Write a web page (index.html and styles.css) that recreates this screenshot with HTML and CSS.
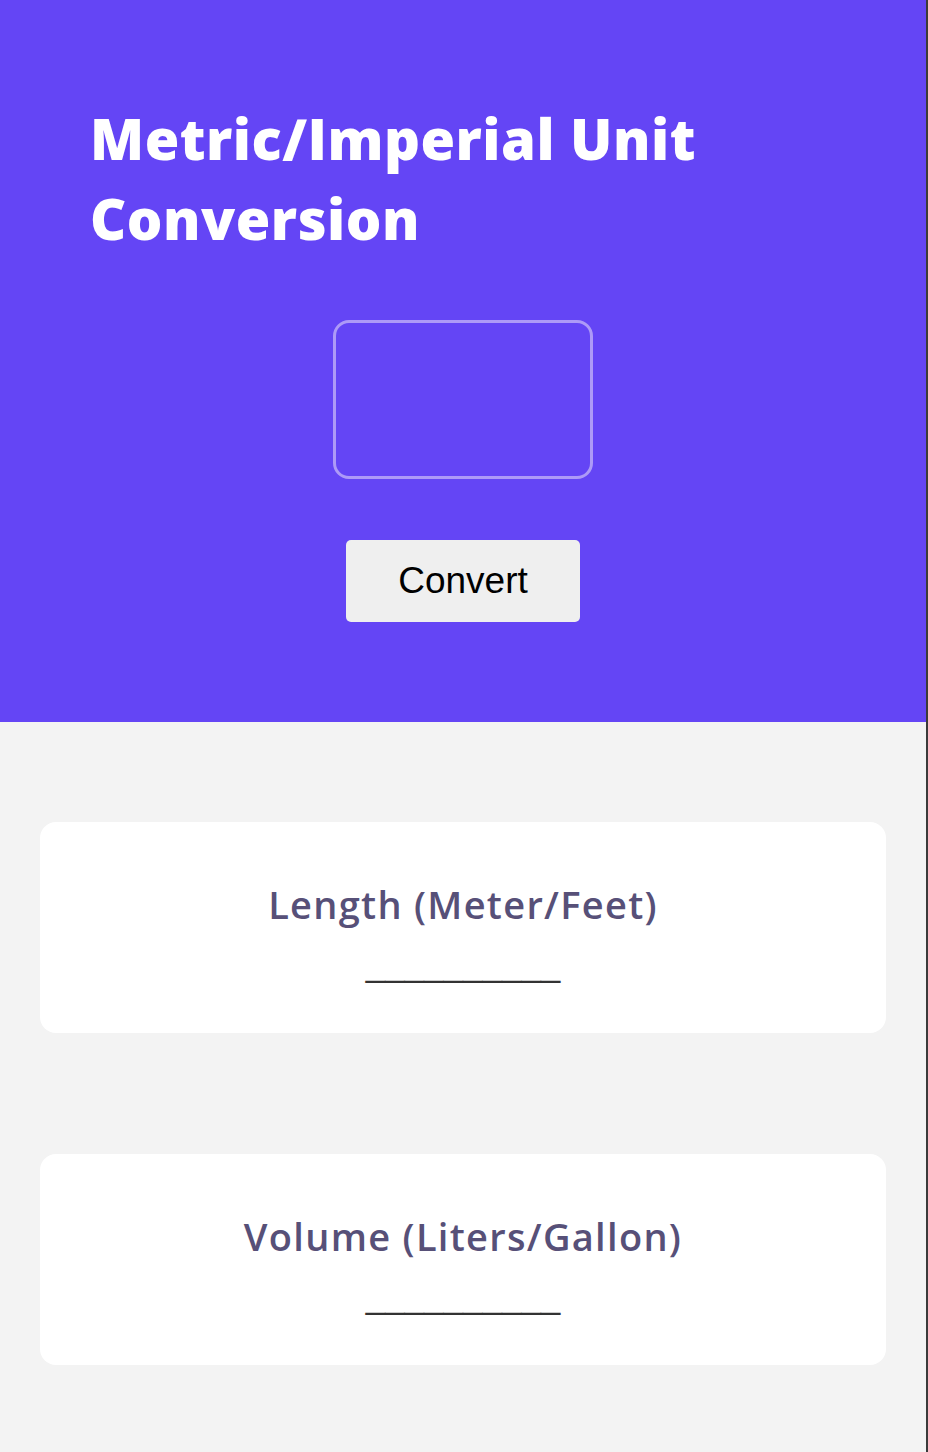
FILE: index.html
```html
<!DOCTYPE html>
<html lang="en">
<head>
<meta charset="utf-8">
<title>Metric/Imperial Unit Conversion</title>
<link rel="stylesheet" href="styles.css">
</head>
<body>
  <header class="hero">
    <h1 class="title">Metric/Imperial Unit<br>Conversion</h1>
    <div class="controls">
      <input class="value-input" type="text" aria-label="Value">
      <button class="convert-btn" type="button">Convert</button>
    </div>
  </header>
  <main class="results">
    <section class="card">
      <h2 class="card-title">Length (Meter/Feet)</h2>
      <p class="card-value">__________</p>
    </section>
    <section class="card">
      <h2 class="card-title">Volume (Liters/Gallon)</h2>
      <p class="card-value">__________</p>
    </section>
  </main>
</body>
</html>
```

FILE: styles.css
```css
html {
  background: #3a3a3a;
}
body {
  margin: 0;
  width: 926px;
  min-height: 100vh;
  background: #f3f3f3;
  font-family: "Open Sans", "Liberation Sans", sans-serif;
}
.hero {
  background: #6445f5;
  height: 722px;
  box-sizing: border-box;
  padding: 98px 90px 0;
}
.title {
  margin: 0;
  color: #fff;
  font-size: 56px;
  font-weight: 800;
  line-height: 80px;
  letter-spacing: 0.5px;
}
.controls {
  display: flex;
  flex-direction: column;
  align-items: center;
  gap: 61px;
  margin-top: 62px;
}
.value-input {
  width: 260px;
  height: 159px;
  box-sizing: border-box;
  background: transparent;
  border: 3px solid #ad9af7;
  border-radius: 16px;
  outline: none;
  color: #fff;
  font-size: 24px;
  text-align: center;
}
.convert-btn {
  width: 234px;
  height: 82px;
  border: none;
  border-radius: 5px;
  background: #efefef;
  color: #000;
  font-family: "Liberation Sans", Arial, sans-serif;
  font-size: 37px;
}
.results {
  padding: 100px 40px 87px;
  display: flex;
  flex-direction: column;
  gap: 121px;
}
.card {
  background: #fff;
  border-radius: 16px;
  height: 211px;
  box-sizing: border-box;
  padding-top: 58px;
  text-align: center;
}
.card-title {
  margin: 0;
  color: #575078;
  font-size: 38px;
  font-weight: 600;
  line-height: 48px;
  letter-spacing: 1.3px;
}
.card-value {
  margin: 16px 0 0;
  color: #333;
  font-family: "Liberation Sans", Arial, sans-serif;
  font-size: 35px;
  line-height: 40px;
}
```
